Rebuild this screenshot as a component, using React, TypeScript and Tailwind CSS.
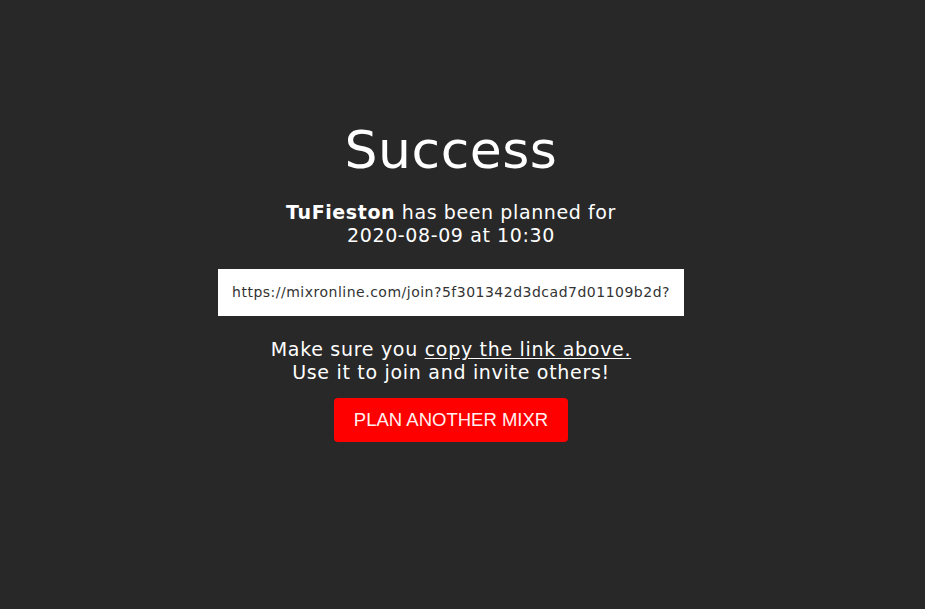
export default function App() {
  return (
    <div className="min-h-[609px] w-full bg-[#282828]">
      <div
        className="flex w-[902px] flex-col items-center pt-[118px] text-white"
        style={{ fontFamily: '"DejaVu Sans", "Noto Sans", sans-serif' }}
      >
        <h1 className="text-[52px] leading-[64px] font-normal tracking-[0.5px]">Success</h1>
        <p className="mt-[19px] text-center text-[19px] leading-[23px] tracking-[0.6px]">
          <span className="font-bold">TuFieston</span> has been planned for
          <br />
          2020-08-09 at 10:30
        </p>
        <div className="mt-[22px] flex h-[47px] w-[466px] items-center justify-center bg-white text-[14px] tracking-[0.5px] text-[#333333]">
          https://mixronline.com/join?5f301342d3dcad7d01109b2d?
        </div>
        <p className="mt-[22px] text-center text-[19px] leading-[23px] tracking-[0.7px]">
          Make sure you <span className="underline underline-offset-2">copy the link above.</span>
          <br />
          Use it to join and invite others!
        </p>
        <button
          className="mt-[14px] h-[44px] w-[234px] rounded-[4px] bg-[#ff0000] text-[18.5px] text-[#fff0f0]"
          style={{ fontFamily: '"Liberation Sans", Arial, sans-serif' }}
        >
          PLAN ANOTHER MIXR
        </button>
      </div>
    </div>
  );
}
